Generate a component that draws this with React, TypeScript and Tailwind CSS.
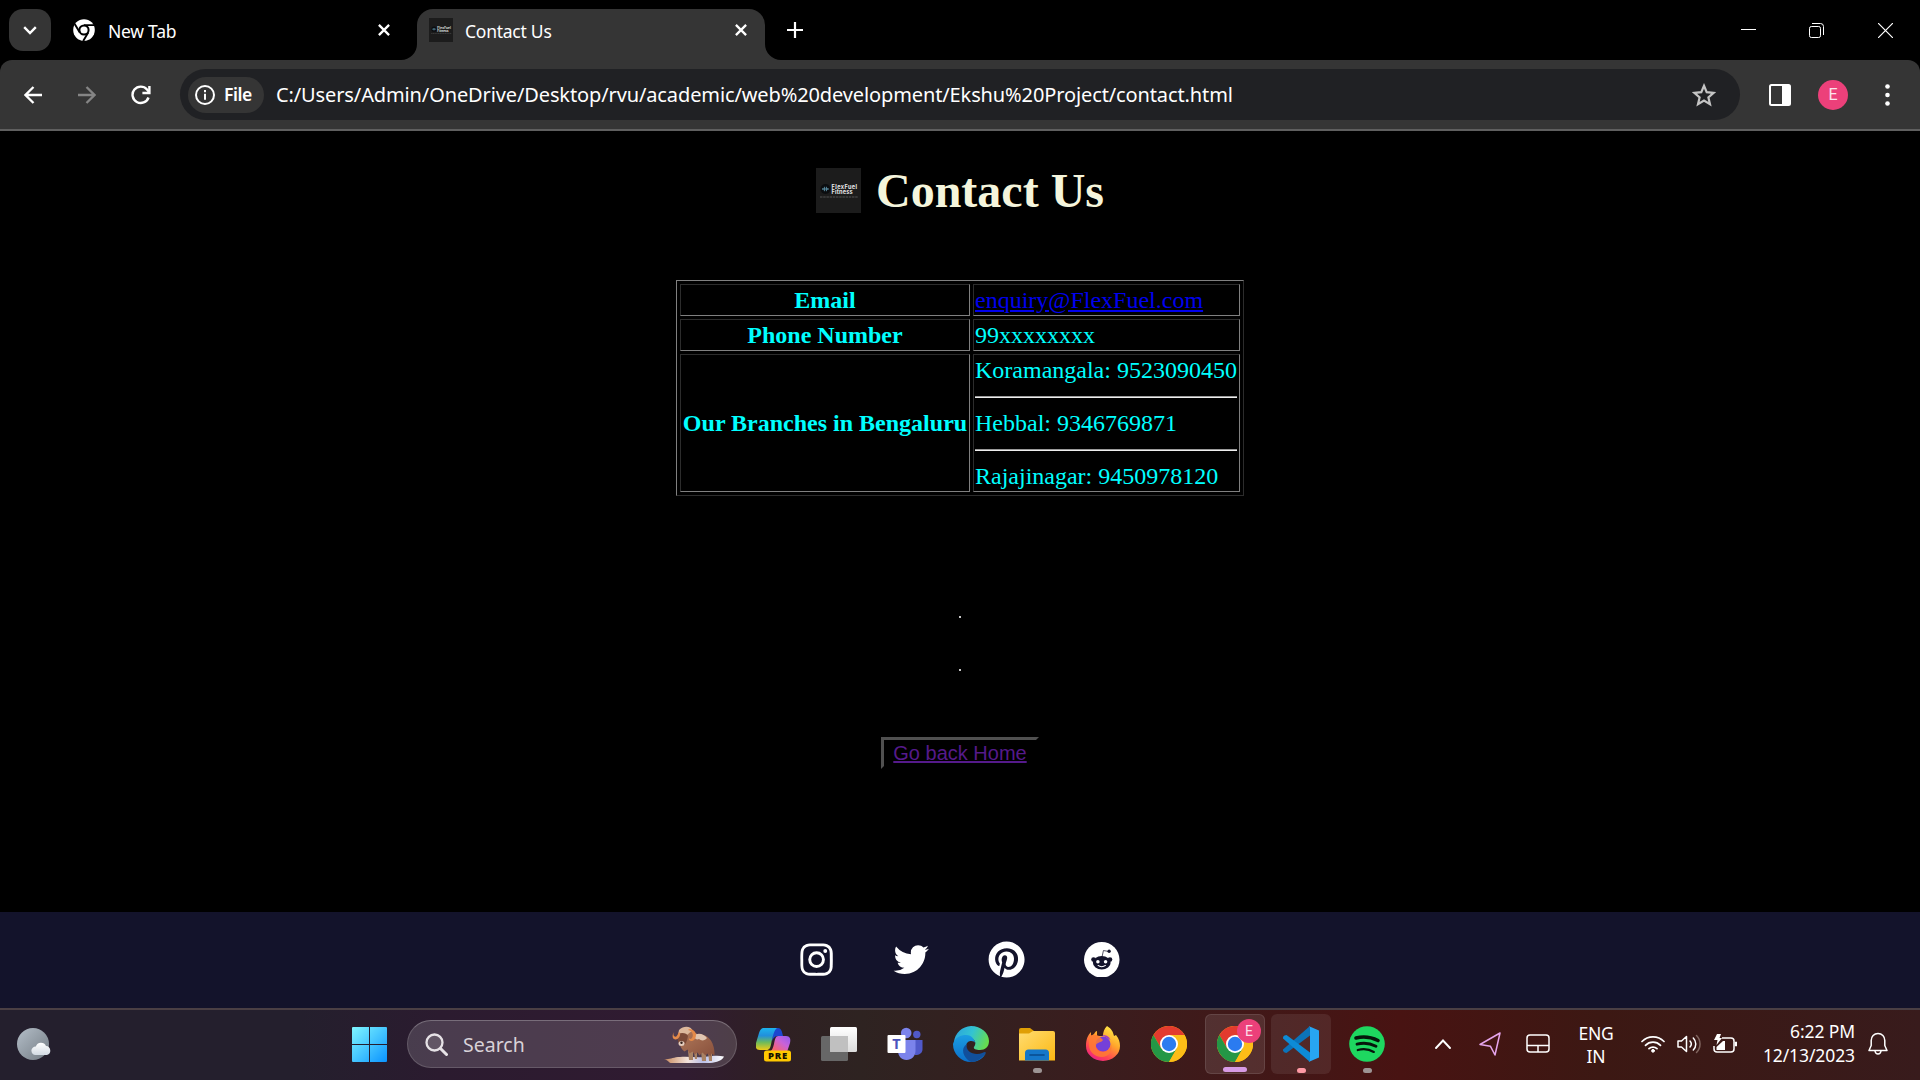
import React from "react";
import { BiLogoInstagram, BiLogoTwitter, BiLogoPinterest } from "react-icons/bi";

const CloseGlyph = () => (
  <svg className="size-3 shrink-0" viewBox="0 0 12 12" fill="none" stroke="#fff" strokeWidth="2.3">
    <path d="M.9.9l10.2 10.2M11.1.9L.9 11.1" />
  </svg>
);

const Flare = ({ flip }: { flip?: boolean }) => (
  <svg
    viewBox="0 0 16 16"
    className={flip ? "absolute -right-4 bottom-0 size-4 -scale-x-100" : "absolute bottom-0 -left-4 size-4"}
  >
    <path d="M16 0v16H0A16 16 0 0 0 16 0z" fill="#353535" />
  </svg>
);

const SiteLogo = ({ className }: { className: string }) => (
  <svg viewBox="0 0 45 45" className={className}>
    <rect width="45" height="45" fill="#1c1c1c" />
    <circle cx="9.5" cy="21" r="5" fill="#0b0d10" />
    <path d="M6.8 20v2M8.4 18.8v4.4M10.4 18.8v4.4M12 20v2M7 21h5" stroke="#5f95ab" strokeWidth=".9" />
    <text x="15.6" y="20.6" fontSize="5.6" fontWeight="700" fill="#e8e8e8" fontFamily="Inter, sans-serif" textLength="25.5">FlexFuel</text>
    <text x="15.6" y="26.4" fontSize="5.6" fontWeight="700" fill="#e8e8e8" fontFamily="Inter, sans-serif" textLength="21">Fitness</text>
    <path d="M4 29h38" stroke="#5a5a5a" strokeWidth=".9" strokeDasharray="2.5 .7" />
  </svg>
);

const RedditLogo = () => (
  <svg viewBox="0 0 106 106" className="h-[35.500px] w-[35.500px]">
    <circle cx="53" cy="53" r="53" fill="#fff" />
    <g fill="#13132b">
      <ellipse cx="53" cy="62" rx="26.500" ry="20" />
      <circle cx="28.500" cy="52.500" r="7" />
      <circle cx="77.500" cy="52.500" r="7" />
      <circle cx="75" cy="27.500" r="5" />
    </g>
    <path d="M54 44l4-18.500 17 3" fill="none" stroke="#13132b" strokeWidth="2.200" />
    <circle cx="41.500" cy="59" r="5.200" fill="#fff" />
    <circle cx="64.500" cy="59" r="5.200" fill="#fff" />
    <path d="M42 70c6 5 16 5 22 0" fill="none" stroke="#fff" strokeWidth="3" strokeLinecap="round" />
  </svg>
);

const ChromeMono = () => (
  <svg viewBox="0 0 22 22" className="size-[22px] shrink-0">
    <circle cx="11" cy="11" r="10.8" fill="#fff" />
    <circle cx="11" cy="11" r="4.6" fill="none" stroke="#000" strokeWidth="2" />
    <path d="M11 6.1h10M6.8 13.6L1.7 4.9M15.2 13.6L10.2 22" stroke="#000" strokeWidth="1.9" />
  </svg>
);

const Chrome = () => (
  <svg viewBox="0 0 36 36" className="size-9">
    <circle cx="18" cy="18" r="18" fill="#fbbc05" />
    <path d="M18 9h15.6A18 18 0 0 0 2.4 9l7.8 13.5z" fill="#e33b2e" />
    <path d="M2.4 9l7.8 13.500L18 27l-.1 9H18A18 18 0 0 1 2.4 9z" fill="#249746" />
    <path d="M10.2 22.5L18 36l7.8-13.5z" fill="#249746" />
    <path d="M33.6 9H18v9l7.8 4.5L18 36A18 18 0 0 0 33.6 9z" fill="#fcbd17" />
    <circle cx="18" cy="18" r="9" fill="#fff" />
    <circle cx="18" cy="18" r="7.2" fill="#2b7bf0" />
  </svg>
);

const WindowsLogo = () => (
  <svg viewBox="0 0 35 35" className="size-[35px]">
    <defs>
      <linearGradient id="win" x1="0" y1="0" x2="35" y2="35" gradientUnits="userSpaceOnUse">
        <stop stopColor="#7ff6ff" />
        <stop offset=".5" stopColor="#46c6ff" />
        <stop offset="1" stopColor="#0a93ff" />
      </linearGradient>
    </defs>
    <path fill="url(#win)" d="M1 0h16v17H0V1a1 1 0 0 1 1-1zM18 0h16a1 1 0 0 1 1 1v16H18zM0 18h17v17H1a1 1 0 0 1-1-1zM18 18h17v16a1 1 0 0 1-1 1H18z" />
  </svg>
);

const Weather = () => (
  <svg viewBox="0 0 36 34" className="h-[34px] w-9">
    <defs>
      <linearGradient id="moon" x1="0" y1="0" x2="1" y2="1">
        <stop stopColor="#b4bec8" />
        <stop offset="1" stopColor="#737c84" />
      </linearGradient>
      <linearGradient id="cloud" x1="0" y1="0" x2="0" y2="1">
        <stop stopColor="#fff" />
        <stop offset="1" stopColor="#d3dbe3" />
      </linearGradient>
    </defs>
    <circle cx="16" cy="17" r="16" fill="url(#moon)" />
    <path d="M18.500 28a4.200 4.200 0 0 1 .3-8.500A5.500 5.500 0 0 1 29 19a4.600 4.600 0 0 1 1 9z" fill="url(#cloud)" />
  </svg>
);

const MuskOx = () => (
  <svg viewBox="0 0 62 38" className="h-[38px] w-[62px]">
    <defs>
      <linearGradient id="fur" x1="0" y1="0" x2="1" y2="1">
        <stop stopColor="#b17a5b" />
        <stop offset="1" stopColor="#88503c" />
      </linearGradient>
      <linearGradient id="snow" x1="0" y1="0" x2="1" y2="0">
        <stop stopColor="#c98a5c" />
        <stop offset=".4" stopColor="#f3e4dc" />
        <stop offset=".65" stopColor="#b9bee6" />
        <stop offset="1" stopColor="#fff" />
      </linearGradient>
    </defs>
    <path d="M1 33c6 1 9-2 16-2 8-1 16 1 24 0 7-1 14-2 20-.5-2 4-7 6-14 6.500H9C5 37 7 35 1 33z" fill="url(#snow)" />
    <path d="M25 25h5v9h-4zM31 25h3v8h-2zM38 25h5v10h-4zM45 25h4v10h-3z" fill="#a98263" />
    <path d="M18 8c5-7 12-3 17 .5 6-1 12 3 14.500 9 2 5 2 8 2 12l-3-2-1 3-3-3-2 2-3-3-3 3-2-3-3 2-2-3-3 2-2-4-3 2c-5-4-6-10-5-17z" fill="url(#fur)" />
    <path d="M30 10c5-4 11-2 14 2-2 3-6 3-8 1-2 1-4 0-6-3z" fill="#e0c5b0" />
    <path d="M16 4c5-5 12-4 14 1-4 1-4 3-6 4-4-1-7 0-9 0z" fill="#dcb89c" />
    <path d="M15 8c4-2 9-1 10 2-1 5-2 9-6 10-4-1-5-7-4-12z" fill="#7b4a38" />
    <ellipse cx="18.500" cy="17.500" rx="3" ry="2.500" fill="#e5cdbd" />
    <circle cx="18.500" cy="16.700" r="1.200" fill="#33211c" />
    <path d="M16 6c-2 4-3 6-5 4-1-1-.5-3 .2-4-2 2-2.500 7 1 7.500 3 .3 5-3 5-6z" fill="#e58b4a" />
    <path d="M25 4c5 1 6 6 3.500 8.500-1 .8-2 .5-2.500-.5-1 3 3 4 5 2 4-4 2-11-5-11z" fill="#e58b4a" />
  </svg>
);

const Copilot = () => (
  <svg viewBox="0 0 35 36" className="h-9 w-[35px]">
    <defs>
      <linearGradient id="cpa" x1="0" y1="0" x2="0" y2="1">
        <stop stopColor="#1cb3ee" />
        <stop offset=".35" stopColor="#218fdc" />
        <stop offset=".65" stopColor="#6cba5c" />
        <stop offset="1" stopColor="#f0cb16" />
      </linearGradient>
      <linearGradient id="cpb" x1="1" y1="0" x2="0" y2="1">
        <stop stopColor="#8f5cf0" />
        <stop offset=".4" stopColor="#c962d8" />
        <stop offset=".8" stopColor="#f8656e" />
        <stop offset="1" stopColor="#fb9b57" />
      </linearGradient>
    </defs>
    <path d="M17 2h5c3 0 4 3 5 8h-5c-3 0-5 2-6 5z" fill="#1b46cf" />
    <path d="M8 2h13c-3 2-4 8-5.500 14-1 6-2 8-5 8H4c-4 0-5-3-4-7L3 7c1-3 2-5 5-5z" fill="url(#cpa)" />
    <path d="M22.500 10H30c4 0 5 3 4 7l-3 9H13c3-1 4-4 5-8 1-5 1.500-8 4.500-8z" fill="url(#cpb)" />
    <rect x="8" y="24.500" width="27" height="11" rx="2.500" fill="#ffc800" />
    <text x="21.600" y="33.400" textAnchor="middle" fontSize="9.500" fontWeight="800" fontFamily="Open Sans, sans-serif" textLength="19" fill="#181200">PRE</text>
  </svg>
);

const TaskView = () => (
  <svg viewBox="0 0 36 36" className="size-9">
    <defs>
      <linearGradient id="tv" x1="0" y1="0" x2="0" y2="1">
        <stop stopColor="#fff" />
        <stop offset="1" stopColor="#dcdcdc" />
      </linearGradient>
    </defs>
    <rect y="10" width="27" height="25" rx="1.500" fill="#676767" />
    <rect x="9" y="1" width="27" height="25" rx="1.500" fill="url(#tv)" />
    <path d="M9 10h18v16H10a1 1 0 0 1-1-1z" fill="#c0c0c0" />
  </svg>
);

const Teams = () => (
  <svg viewBox="0 0 36 36" className="size-9">
    <circle cx="29.800" cy="8.500" r="3.700" fill="#5059c9" />
    <path d="M26 14h9.500v9c0 4-3 6-7.500 6z" fill="#5059c9" />
    <circle cx="19.200" cy="7" r="5.300" fill="#7b83eb" />
    <path d="M11 14h17.500v11c0 5-4 9-9 9s-8.500-4-8.500-9z" fill="#7b83eb" />
    <rect x=".5" y="9" width="18" height="18" rx="1" fill="#fff" />
    <text x="9.500" y="23.300" textAnchor="middle" fontSize="14.500" fontWeight="700" fontFamily="Open Sans, sans-serif" fill="#4b53bc">T</text>
  </svg>
);

const Edge = () => (
  <svg viewBox="0 0 36 36" className="size-9">
    <defs>
      <linearGradient id="eg" x1="0" y1=".2" x2="1" y2=".5">
        <stop stopColor="#2aa4dd" />
        <stop offset=".5" stopColor="#33c3d2" />
        <stop offset="1" stopColor="#66dd4f" />
      </linearGradient>
      <linearGradient id="eb" x1="0" y1="0" x2="0" y2="1">
        <stop stopColor="#1b9de2" />
        <stop offset="1" stopColor="#0b6fc9" />
      </linearGradient>
    </defs>
    <path d="M1 16A18 18 0 0 1 18 0c10 0 18 7 18 15 0 6-4 9-9 9-4 0-7-1-6-3 3-4 1-8-4-9-6-1-12 1-16 4z" fill="url(#eg)" />
    <path d="M0 18C2 11 8 9 13 9c6 0 9 5 9 8 0-2-8-4-9 3-1 8 6 12 13 11 3 0 6-3 7-4-3 6-9 9-15 9A18 18 0 0 1 0 18z" fill="url(#eb)" />
    <path d="M14 18c-2 6 4 10 10 10 4 0 7-2 8-2 1 0 1 1 0 2-3 4-8 8-14 8-8-4-11-14-4-18z" fill="#114f9b" />
  </svg>
);

const Folder = () => (
  <svg viewBox="0 0 36 36" className="size-9">
    <defs>
      <linearGradient id="fo" x1="0" y1="0" x2="1" y2="1">
        <stop stopColor="#ffdc70" />
        <stop offset="1" stopColor="#fcb813" />
      </linearGradient>
    </defs>
    <path d="M0 4a2 2 0 0 1 2-2h9l4 3-3 4H0z" fill="#e09f05" />
    <path d="M0 7.500h10L14 5h20a2 2 0 0 1 2 2v27.500H0z" fill="url(#fo)" />
    <path d="M6 34.500V27a3.500 3.500 0 0 1 3.500-3.500h17A3.500 3.500 0 0 1 30 27v7.500z" fill="#1577c9" />
    <path d="M11 29h14" stroke="#084b8c" strokeWidth="1.600" strokeLinecap="round" />
  </svg>
);

const Firefox = () => (
  <svg viewBox="0 0 36 36" className="size-9">
    <defs>
      <linearGradient id="ff" x1=".8" y1="0" x2=".2" y2="1">
        <stop stopColor="#fff04a" />
        <stop offset=".4" stopColor="#ffa52b" />
        <stop offset=".75" stopColor="#ff4453" />
        <stop offset="1" stopColor="#e61c8f" />
      </linearGradient>
    </defs>
    <path d="M22 0c5 3 6 6 7 10l2-1c3 4 4 7 4 11a17 15 0 0 1-34 0C1 13 3 9 6 6v4l3-2c1-2 2-3 3-3v5h6c0-4 1-7 4-10z" fill="url(#ff)" />
    <circle cx="18" cy="18" r="7.500" fill="#7540d8" />
    <path d="M4 10c5-2 9-2 12 2l2 2c-2 3-6 2-7 5-1 4 3 7 7 7 5 0 8-3 8-8 2 8-3 13-9 13C9 31 4 25 4 19z" fill="#ff7a32" opacity=".85" />
    <path d="M17 9c4 0 7 1 8.500 5l-5-3z" fill="#a23cc7" />
  </svg>
);

const VSCode = () => (
  <svg viewBox="0 0 36 36" className="size-9">
    <path d="M27 0L0 23.500c-.5 1 .2 2 1.500 3L3.500 27 27 9.500z" fill="#0b73b9" />
    <path d="M27 36L0 12.500c-.5-1 .2-2 1.500-3L3.500 9 27 26.500z" fill="#0d8bd6" />
    <path d="M25.500 0L36 4.500v27L25.500 36c1-.5 1.500-1 1.500-2V2c0-1-.5-1.500-1.500-2z" fill="#27a5f2" />
  </svg>
);

const Spotify = () => (
  <svg viewBox="0 0 36 36" className="size-9">
    <circle cx="18" cy="18" r="17.800" fill="#1ed760" />
    <g fill="none" stroke="#06150b" strokeLinecap="round">
      <path d="M7 12c8-2 15-1 22 2.500" strokeWidth="3.600" />
      <path d="M8 18.200c7-2 13-1 19 2" strokeWidth="2.900" />
      <path d="M8.800 24c6-1.500 11-1 16 1.900" strokeWidth="2.300" />
    </g>
  </svg>
);

const Slot = ({ children, tile, mark }: { children: React.ReactNode; tile?: string; mark?: string }) => (
  <div className="flex w-[66px] items-center justify-center">
    <div className={`relative flex size-[60px] items-center justify-center rounded-md ${tile ?? ""}`}>
      {children}
      {mark && <span className={`absolute bottom-px h-[5px] rounded-full ${mark}`} />}
    </div>
  </div>
);

const cellBorder = "border border-t-[#2c2c2c] border-l-[#2c2c2c] border-r-[#808080] border-b-[#808080] pl-px";

const App = () => (
  <div className="flex h-[1080px] w-[1920px] flex-col overflow-hidden bg-black font-['Noto_Sans',sans-serif] text-white">
    <div className="flex h-[60px] shrink-0 items-center">
      <div className="ml-[9px] flex size-[42px] items-center justify-center rounded-[14px] bg-[#353535]">
        <svg viewBox="0 0 14 9" className="h-[9px] w-[14px]" fill="none" stroke="#fff" strokeWidth="2.400">
          <path d="M1.200 1.200L7 7l5.800-5.800" />
        </svg>
      </div>
      <div className="ml-[22px] flex w-[344px] items-center">
        <ChromeMono />
        <span className="ml-[13px] pt-0.5 text-[17.500px] leading-6 tracking-[-0.250px]">New Tab</span>
        <span className="ml-auto pr-[27px]"><CloseGlyph /></span>
      </div>
      <div className="relative mt-[9px] flex h-[51px] w-[348px] items-center rounded-t-[16px] bg-[#353535] pr-[18px] pb-[9px] pl-3">
        <Flare />
        <Flare flip />
        <SiteLogo className="size-6" />
        <span className="ml-3 pt-0.5 text-[17.500px] leading-6 tracking-[-0.250px]">Contact Us</span>
        <span className="ml-auto"><CloseGlyph /></span>
      </div>
      <svg viewBox="0 0 16 16" className="ml-[22px] size-4" stroke="#fff" strokeWidth="2.200"><path d="M8 0v16M0 8h16" /></svg>
      <div className="mr-[27px] ml-auto flex w-[152px] items-center">
        <svg viewBox="0 0 15 15" className="size-[15px]"><path d="M0 6.500h15" stroke="#fff" strokeWidth="1" /></svg>
        <svg viewBox="0 0 15 15" className="ml-[53px] size-[15px]" fill="none" stroke="#fff">
          <rect x=".5" y="3.500" width="11" height="11" rx="1.800" />
          <path d="M3 .5h8.500a3 3 0 0 1 3 3V12" />
        </svg>
        <svg viewBox="0 0 15 15" className="ml-auto size-[15px]" stroke="#fff" strokeWidth="1.200"><path d="M0 0l15 15M15 0L0 15" /></svg>
      </div>
    </div>

    <div className="flex h-[71px] shrink-0 items-center rounded-t-[12px] border-b-2 border-[#5f5f5f] bg-[#353535]">
      <svg viewBox="0 0 18 18" className="ml-6 size-[18px]" fill="none" stroke="#fff" strokeWidth="2.300"><path d="M18 9H2M9.500 1L1.500 9l8 8" /></svg>
      <svg viewBox="0 0 18 18" className="ml-9 size-[18px]" fill="none" stroke="#858585" strokeWidth="2.300"><path d="M0 9h16M8.500 1l8 8-8 8" /></svg>
      <svg viewBox="0 0 20 20" className="ml-[35px] size-5" fill="none" stroke="#fff" strokeWidth="2.400">
        <path d="M17.500 12.500A8.200 8.200 0 1 1 16 4.500l2 2.500" />
        <path d="M18.400 1v7h-7" />
      </svg>
      <div className="ml-[29px] flex h-[51px] w-[1560px] items-center rounded-full bg-[#202124] pl-2">
        <div className="flex h-9 w-[76px] items-center rounded-full bg-[#353535] pl-[7px]">
          <svg viewBox="0 0 20 20" className="size-5" fill="none" stroke="#fff" strokeWidth="2">
            <circle cx="10" cy="10" r="9" />
            <path d="M10 8.800v6M10 5v2.200" />
          </svg>
          <span className="ml-[9px] text-[17.500px] font-semibold tracking-[-0.400px]">File</span>
        </div>
        <span className="ml-3 text-[20px] tracking-[-0.118px] whitespace-nowrap">C:/Users/Admin/OneDrive/Desktop/rvu/academic/web%20development/Ekshu%20Project/contact.html</span>
        <svg viewBox="0 0 24 24" className="mr-6 ml-auto size-6" fill="none" stroke="#c4c4c4" strokeWidth="2.200">
          <path d="M12 2.800l2.700 6.400 7 .6-5.300 4.600 1.600 6.800-6-3.600-6 3.600 1.600-6.800L2.300 9.800l7-.6z" />
        </svg>
      </div>
      <svg viewBox="0 0 22 22" className="ml-[28.500px] size-[22px]"><rect x="1" y="1" width="20" height="20" rx="1.500" fill="none" stroke="#fff" strokeWidth="2" /><path d="M13 1h8v20h-8z" fill="#fff" /></svg>
      <div className="ml-[27.500px] flex size-[30px] items-center justify-center rounded-full bg-[#ec407a] font-['Roboto',sans-serif] text-[16px] text-[#fbe4ec]">E</div>
      <svg viewBox="0 0 5 22" className="ml-[36.500px] h-[22px] w-[5px]" fill="#fff"><circle cx="2.500" cy="2.500" r="2.300" /><circle cx="2.500" cy="11" r="2.300" /><circle cx="2.500" cy="19.500" r="2.300" /></svg>
    </div>

    <main className="flex min-h-0 flex-1 flex-col items-center font-['Liberation_Serif',serif]">
      <div className="mt-[32px] mb-px flex h-[55px] items-center">
        <SiteLogo className="mt-[-1px] size-[45px]" />
        <h1 className="ml-[15px] text-[48px] leading-[55px] font-bold text-[#f5f5dc]">Contact Us</h1>
      </div>
      <div className="mt-[61px] grid grid-cols-[290px_267px] grid-rows-[32px_32px_138px] gap-[3px] border border-t-[#808080] border-r-[#2c2c2c] border-b-[#2c2c2c] border-l-[#808080] p-[3px] text-[24px] leading-[27px] text-[#00ffff]">
        <div className={`flex items-center justify-center pr-px font-bold ${cellBorder}`}>Email</div>
        <div className={`flex items-center ${cellBorder}`}><a className="text-[#0000ee] underline">enquiry@FlexFuel.com</a></div>
        <div className={`flex items-center justify-center pr-px font-bold ${cellBorder}`}>Phone Number</div>
        <div className={`flex items-center ${cellBorder}`}>99xxxxxxxx</div>
        <div className={`flex items-center justify-center pr-px font-bold whitespace-nowrap ${cellBorder}`}>Our Branches in Bengaluru</div>
        <div className={`flex flex-col justify-center pr-0.5 whitespace-nowrap ${cellBorder}`}>
          <p>Koramangala: 9523090450</p>
          <hr className="my-3 h-0.5 border-t border-b border-t-[#9a9a9a] border-b-[#eeeeee]" />
          <p>Hebbal: 9346769871</p>
          <hr className="my-3 h-0.5 border-t border-b border-t-[#9a9a9a] border-b-[#eeeeee]" />
          <p>Rajajinagar: 9450978120</p>
        </div>
      </div>
      <span className="mt-[120px] size-0.5 bg-[#c8c8c8]" />
      <span className="mt-[51px] size-0.5 bg-[#c8c8c8]" />
      <button className="mt-[66px] flex h-8 w-[158px] items-center justify-center border-[3px] border-t-[#505050] border-r-black border-b-black border-l-[#505050] bg-black font-['Liberation_Sans',sans-serif] text-[20px] leading-6 text-[#551a8b]">
        <span className="whitespace-nowrap underline">Go back Home</span>
      </button>
    </main>

    <footer className="flex h-24 shrink-0 items-center justify-center gap-[51.800px] bg-[#13132b] pr-px pb-px text-[43.200px]">
      <BiLogoInstagram />
      <BiLogoTwitter />
      <BiLogoPinterest />
      <span className="flex size-[43.200px] items-center justify-center"><RedditLogo /></span>
    </footer>

    <div className="flex h-[72px] shrink-0 items-center border-t-2 border-[#4a3f44] bg-[linear-gradient(90deg,#241f2d_0px,#241f2d_300px,#2b1b2f_440px,#301b31_680px,#2f2023_780px,#2e2321_860px,#3a1d1e_1100px,#481312_1400px,#3c1813_1600px,#381b1c_1920px)] pb-0.5">
      <div className="flex w-[352px] pl-[17px]"><Weather /></div>
      <WindowsLogo />
      <div className="ml-5 flex h-12 w-[330px] items-center rounded-full border border-white/15 border-t-white/25 bg-white/15 pl-[17px]">
        <svg viewBox="0 0 23 23" className="size-[23px]" fill="none" stroke="#e6e2e6" strokeLinecap="round">
          <circle cx="9.500" cy="9.500" r="8" strokeWidth="2.300" fill="#ffffff22" />
          <path d="M15.500 15.500l6 6" strokeWidth="3" />
        </svg>
        <span className="ml-[15px] pt-0.5 text-[19.500px] text-[#d8d2d8]">Search</span>
        <span className="mt-0.5 mr-[11px] ml-auto"><MuskOx /></span>
      </div>
      <div className="ml-[3px] flex">
        <Slot><Copilot /></Slot>
        <Slot><TaskView /></Slot>
        <Slot><Teams /></Slot>
        <Slot><Edge /></Slot>
        <Slot mark="w-[9px] bg-[#9d9494]"><Folder /></Slot>
        <Slot><Firefox /></Slot>
        <Slot><Chrome /></Slot>
        <Slot tile="border border-white/10 bg-white/10" mark="w-6 bg-[#d79be5]">
          <Chrome />
          <span className="absolute top-1 right-[3px] flex size-6 items-center justify-center rounded-full bg-[#ec407a] font-['Roboto',sans-serif] text-[14px] text-[#fbdce7]">E</span>
        </Slot>
        <Slot tile="bg-white/8" mark="w-[9px] bg-[#ff99a4]"><VSCode /></Slot>
        <Slot mark="w-[9px] bg-[#9d9494]"><Spotify /></Slot>
      </div>
      <div className="ml-5 flex items-center text-[17.500px] leading-6">
        <div className="flex w-[46px] justify-center">
          <svg viewBox="0 0 16 10" className="h-2.5 w-4" fill="none" stroke="#fff" strokeWidth="1.900" strokeLinecap="round"><path d="M1 9l7-7.500L15 9" /></svg>
        </div>
        <div className="flex w-12 justify-center">
          <svg viewBox="0 0 22 24" className="h-6 w-[22px]" fill="none" stroke="#e6a5ec" strokeWidth="1.500" strokeLinejoin="round"><path d="M21 1L1 12.500l10.500 1.800L16 23z" /></svg>
        </div>
        <div className="flex w-12 justify-center">
          <svg viewBox="0 0 24 20" className="h-5 w-6" fill="none" stroke="#fff" strokeWidth="1.500"><rect x="1" y="1" width="22" height="17" rx="3" /><path d="M1 11.500h22M12 11.500V18" /></svg>
        </div>
        <div className="w-[68px] pt-0.5 text-center leading-[23px]"><p className="tracking-[-0.300px]">ENG</p><p>IN</p></div>
        <div className="flex w-[46px] justify-center">
          <svg viewBox="0 0 24 18" className="h-[18px] w-6" fill="none" stroke="#fff" strokeWidth="1.700" strokeLinecap="round">
            <path d="M1 6.500a15.500 15.500 0 0 1 22 0M4.500 10.300a10.600 10.600 0 0 1 15 0M8 13.700a5.700 5.700 0 0 1 8 0" />
            <circle cx="12" cy="15.800" r="1.400" fill="#fff" strokeWidth="1" />
          </svg>
        </div>
        <div className="flex w-[30px] pl-px">
          <svg viewBox="0 0 25 20" className="h-5 w-[25px]" fill="none" stroke="#fff" strokeWidth="1.500" strokeLinecap="round" strokeLinejoin="round">
            <path d="M1 7h3.500L9.500 2.500v15L4.500 13H1z" />
            <path d="M13 7a4.500 4.500 0 0 1 0 6M16.300 4a8.500 8.500 0 0 1 0 12" />
            <path d="M19.500 1.500a12 12 0 0 1 0 17" stroke="#80655f" />
          </svg>
        </div>
        <div className="flex w-[34px] pl-[7px]">
          <svg viewBox="0 0 24 20" className="h-5 w-6" fill="none" stroke="#fff" strokeWidth="1.500">
            <path d="M9 4h9a3 3 0 0 1 3 3v8a3 3 0 0 1-3 3H4a3 3 0 0 1-3-3v-3" />
            <path d="M22 8h2v4h-2z" fill="#fff" strokeWidth=".5" />
            <path d="M10 7h2v9H3.500v-3z" fill="#fff" stroke="none" />
            <path d="M4 0h4L6.500 4H9l-5.500 7 1-5H1z" fill="#fff" stroke="none" />
          </svg>
        </div>
        <div className="w-[115px] pb-0.5 text-right leading-6 tracking-[-0.100px] whitespace-nowrap"><p>6:22 PM</p><p>12/13/2023</p></div>
        <div className="flex w-[46px] justify-center">
          <svg viewBox="0 0 20 24" className="h-6 w-5" fill="none" stroke="#fff" strokeWidth="1.500" strokeLinejoin="round">
            <path d="M10 1.500c-4 0-6.800 3-6.800 7v5L1 18.500h18l-2.200-5v-5c0-4-2.800-7-6.800-7z" />
            <path d="M7 19c.3 2 1.500 3 3 3s2.700-1 3-3" />
          </svg>
        </div>
      </div>
    </div>
  </div>
);

export default App;
